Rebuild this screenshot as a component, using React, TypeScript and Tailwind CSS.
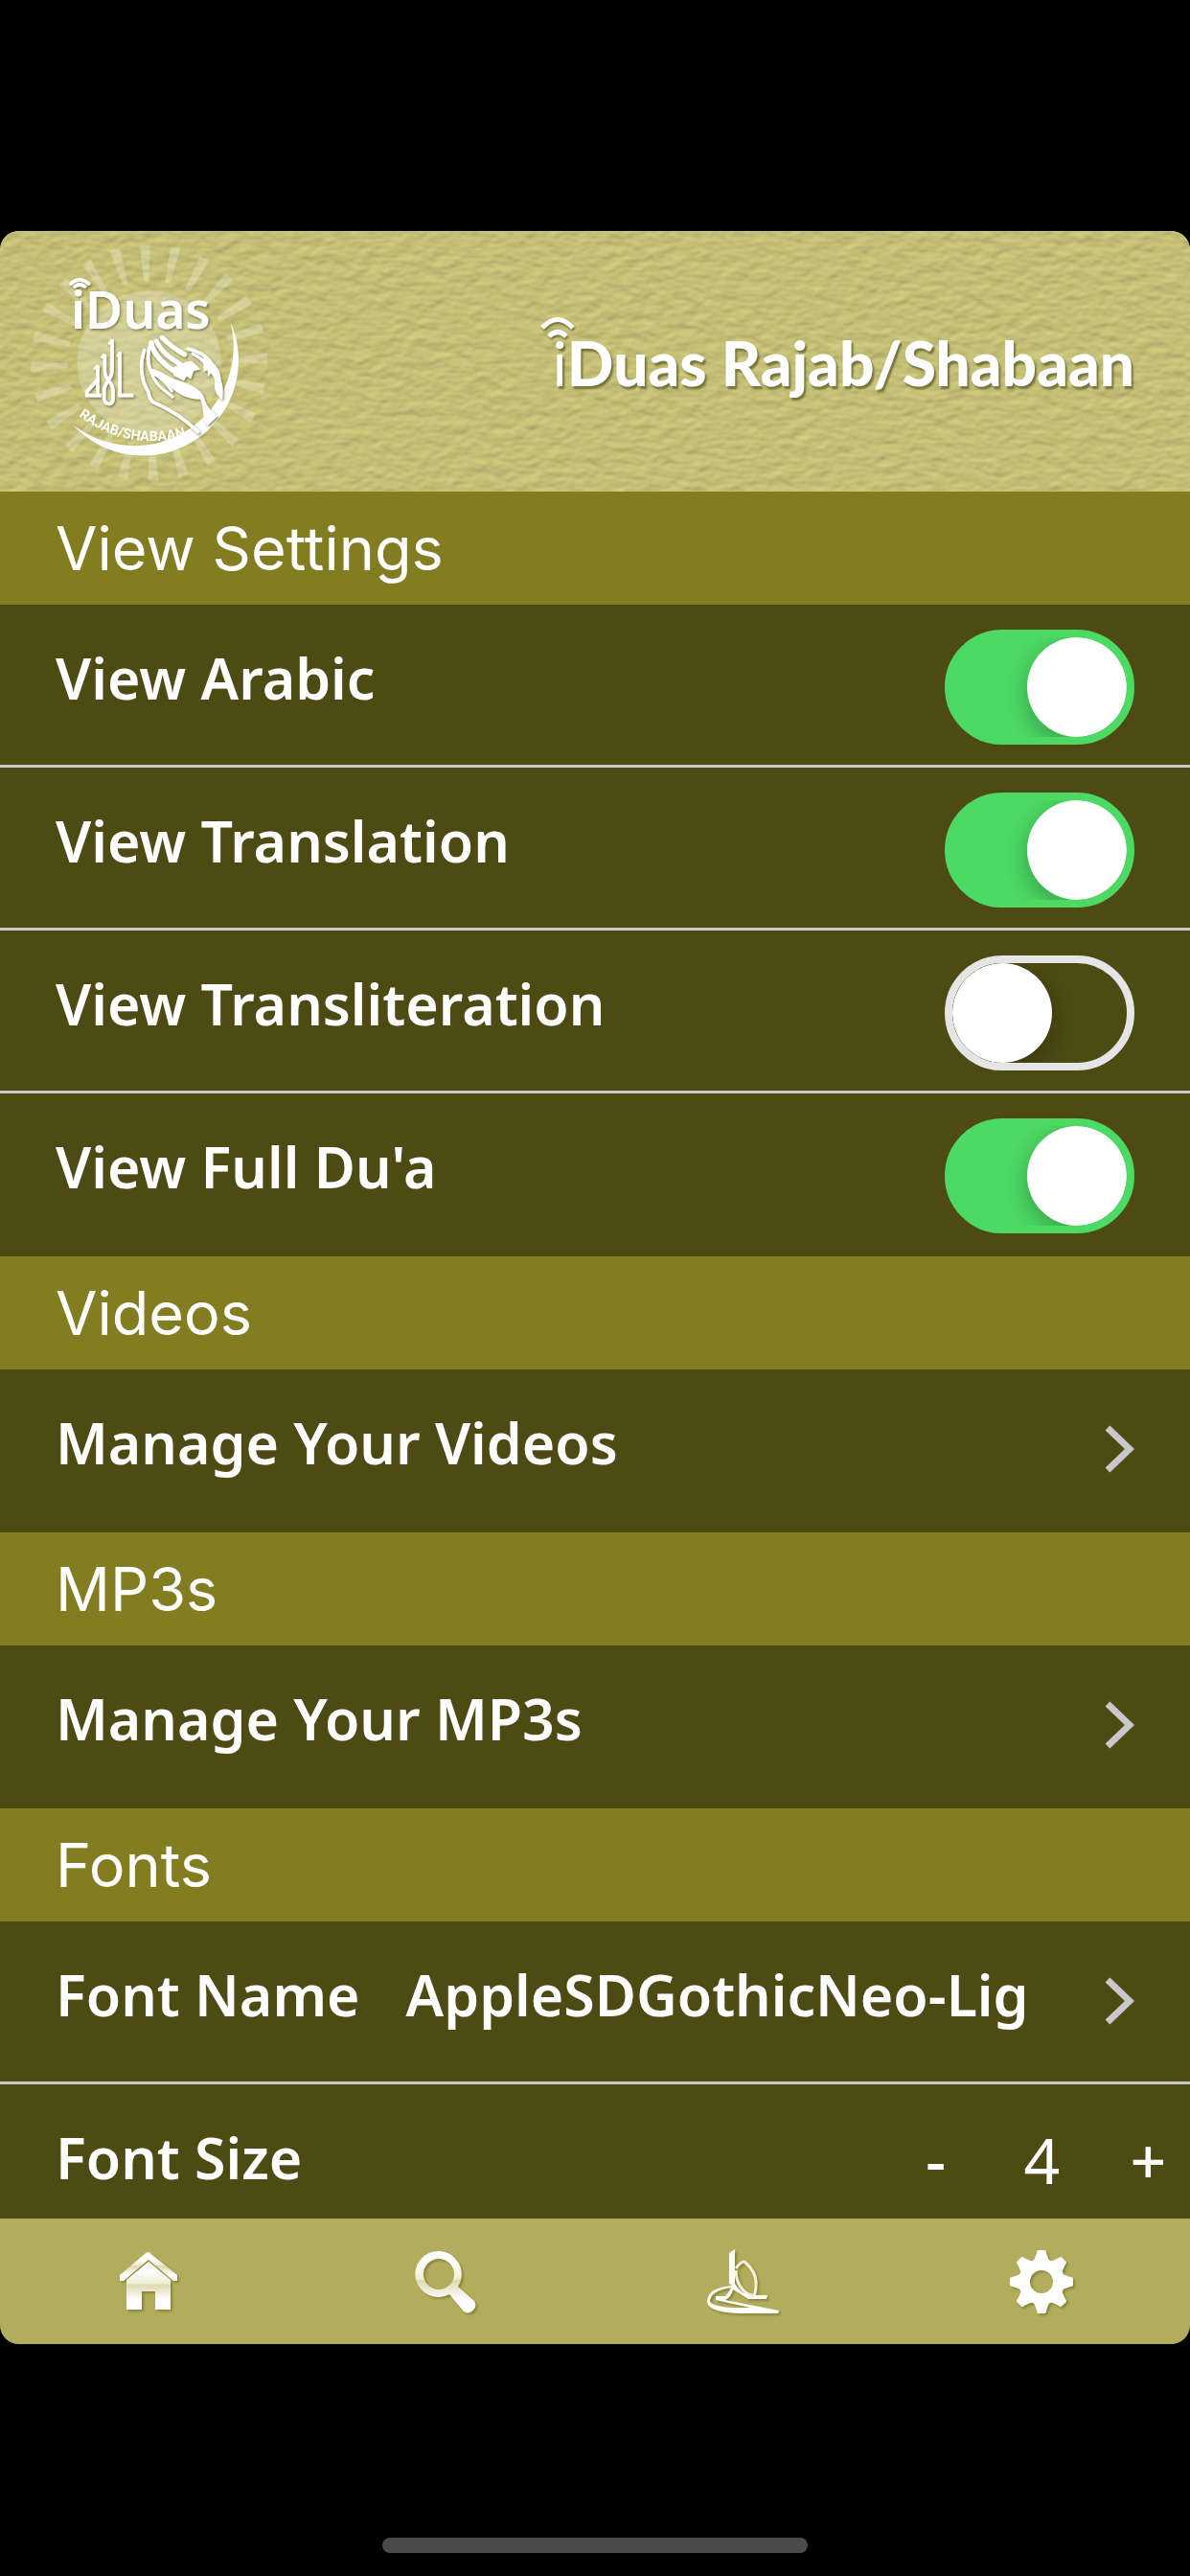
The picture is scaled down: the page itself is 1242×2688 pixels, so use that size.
import React, { useState } from 'react';

const rayAngles = Array.from({ length: 24 }, (_, i) => i * 15 - 2);

const HeaderTexture: React.FC = () => (
  <svg className="absolute inset-0 w-full h-full" aria-hidden="true">
    <filter id="paper" x="0" y="0" width="100%" height="100%" colorInterpolationFilters="sRGB">
      <feTurbulence type="fractalNoise" baseFrequency="0.06 0.1" numOctaves="2" seed="7" />
      <feColorMatrix values="0 0 0 0 0  0 0 0 0 0  0 0 0 0 0  1 0 0 0 0" />
      <feDiffuseLighting surfaceScale="0.9" diffuseConstant="1" lightingColor="#dcd685">
        <feDistantLight azimuth="250" elevation="63" />
      </feDiffuseLighting>
    </filter>
    <rect width="100%" height="100%" filter="url(#paper)" />
  </svg>
);

const Logo: React.FC = () => (
  <svg viewBox="0 33 960 816" className="relative w-[320px] h-[272px]" role="img" aria-label="iDuas logo">
    <defs>
      <path id="motto" d="M246 612 Q400 728 600 672" />
      <filter id="logoShadow" x="-10%" y="-10%" width="120%" height="120%">
        <feDropShadow dx="4" dy="5" stdDeviation="3" floodColor="#5c5a2a" floodOpacity="0.7" />
      </filter>
    </defs>
    <g fill="#fff" opacity="0.25">
      <circle cx="467" cy="445" r="225" />
      {rayAngles.map(angle => (
        <path key={angle} d="M451 75 H483 L475 190 H459 Z" transform={`rotate(${angle} 467 445)`} />
      ))}
    </g>
    <path fill="#fff" d="M722 318 A299 299 0 0 1 228 640 A312 312 0 0 0 722 318 Z" />
    <g filter="url(#logoShadow)">
      <g fill="none" stroke="#fff" strokeWidth="11" strokeLinecap="round">
        <path d="M222 198 Q250 174 278 198" />
        <path d="M234 207 Q250 195 266 207" />
      </g>
      <text x="222" y="340" fill="#fff" fontSize="160" fontWeight="600" fontFamily="'Noto Sans', sans-serif">iDuas</text>
      <g fill="none" stroke="#fff" strokeWidth="11" strokeLinejoin="round">
        <path d="M351 372 V468 Q351 486 340 500 Q326 518 326 534 V558 Q328 574 342 574 Q354 574 354 558 V534 Q354 518 340 500 Q328 488 328 470 V420" />
        <path d="M306 455 V498 L272 536 V548 H318" />
        <path d="M306 498 V548" />
        <path d="M375 412 V548 H418" />
        <path d="M340 388 L351 374 M318 430 L328 418 M366 426 L377 414 M296 466 L306 453" strokeWidth="8" />
      </g>
      <g fill="none" stroke="#fff" strokeLinecap="round" strokeLinejoin="round">
        <path strokeWidth="11" d="M452 406 C436 452 442 500 464 536 Q468 558 478 568 C530 590 580 622 620 662" />
        <path strokeWidth="11" d="M472 386 C460 420 462 440 470 468" />
        <path strokeWidth="16" d="M474 384 C480 420 510 448 556 480" />
        <path strokeWidth="15" d="M490 378 C505 410 530 430 576 458" />
        <path strokeWidth="15" d="M508 367 C530 390 550 405 578 420" />
        <path strokeWidth="9" d="M474 476 C484 512 508 526 540 552 M480 478 C505 492 522 508 538 534" />
        <path strokeWidth="10" d="M588 402 C620 408 645 424 662 446 M604 418 C625 428 640 440 650 458" />
      </g>
      <g fill="#fff">
        <path d="M540 462 C565 450 580 440 600 440 L628 466 L606 472 L598 496 L584 488 L576 502 L545 486 Z" />
        <path d="M468 462 C512 472 530 494 560 502 C600 514 628 530 638 552 C645 580 660 598 682 612 L650 642 C632 622 640 592 628 560 C590 560 560 545 530 518 C510 500 490 488 470 480 Z" />
        <path d="M636 430 C668 440 690 462 692 500 C700 520 698 540 696 562 C684 552 672 540 672 520 C676 500 668 488 660 478 L652 490 L650 468 L638 474 Z" />
      </g>
    </g>
    <text fill="#fff" fontSize="43" fontWeight="700" fontFamily="Roboto, sans-serif">
      <textPath href="#motto">RAJAB/SHABAAN</textPath>
    </text>
  </svg>
);

const Chevron: React.FC = () => (
  <svg viewBox="0 0 32 50" className="w-8 h-[50px] shrink-0" aria-hidden="true">
    <path d="M4 3 L27 25 L4 47" fill="none" stroke="#c8c7cc" strokeWidth="7" />
  </svg>
);

const SectionTitle: React.FC<{ children: React.ReactNode }> = ({ children }) => (
  <h2 className="h-[118px] shrink-0 flex items-center px-[58px] bg-[#827d20] font-['Inter'] font-normal text-[63px] leading-[80px]">
    {children}
  </h2>
);

interface ToggleRowProps {
  id: string;
  label: string;
  checked: boolean;
  onChange: (v: boolean) => void;
}

const ToggleRow: React.FC<ToggleRowProps> = ({ id, label, checked, onChange }) => (
  <div className="h-[170px] shrink-0 flex items-start justify-between px-[58px] pt-[26px] border-b-[3px] border-[#c8c7cc] last:border-transparent">
    <label htmlFor={id} className="pt-1.5 leading-[88px]">{label}</label>
    <input
      id={id}
      type="checkbox"
      checked={checked}
      onChange={e => onChange(e.target.checked)}
      className="appearance-none w-[198px] h-[120px] shrink-0 rounded-full border-8 border-[#e5e5e5] overflow-hidden checked:border-[#4cd964] checked:bg-[#4cd964] before:block before:w-[104px] before:h-[104px] before:rounded-full before:bg-white before:shadow-[0_8px_20px_4px_rgba(0,0,0,0.2)] checked:before:ml-[78px]"
    />
  </div>
);

interface LinkRowProps {
  label: string;
  value?: string;
  divider?: boolean;
}

const LinkRow: React.FC<LinkRowProps> = ({ label, value, divider }) => (
  <a
    href="#"
    className={`h-[170px] shrink-0 flex items-start justify-between px-[58px] pt-[26px] border-b-[3px] ${divider ? 'border-[#c8c7cc]' : 'border-transparent'}`}
  >
    <span className="flex gap-12 pt-1.5 leading-[88px] whitespace-nowrap">
      <span>{label}</span>
      {value && <span>{value}</span>}
    </span>
    <span className="pt-8"><Chevron /></span>
  </a>
);

const HomeIcon: React.FC = () => (
  <svg viewBox="0 0 62 64" className="w-[62px] h-16" aria-hidden="true">
    <path d="M31 1 L61 25 V31 L57 31 L31 9 L5 31 L1 31 V25 L27 3 Q31 -1 35 3 Z" fill="url(#gloss)" />
    <path d="M31 11 L54 30 V61 H38 V42 H24 V61 H8 V30 Z" fill="url(#gloss)" />
  </svg>
);

const SearchIcon: React.FC = () => (
  <svg viewBox="0 0 66 66" className="w-[66px] h-[66px]" aria-hidden="true">
    <path
      fillRule="evenodd"
      fill="url(#gloss)"
      d="M25 1 A24 24 0 0 1 45 38 L62 53 A8 8 0 0 1 51 64 L36 46 A24 24 0 1 1 25 1 Z M25 9 A16 16 0 1 0 25 41 A16 16 0 1 0 25 9 Z"
    />
  </svg>
);

const DuaIcon: React.FC = () => (
  <svg viewBox="0 0 78 68" className="w-[78px] h-[68px]" aria-hidden="true">
    <path d="M24 4 L30 0 V36 Q36 47 48 48 H64 L63 52 H44 L28 42 Q26 50 20 53 L76 64 L75 67 H36 Q1 66 1 54 Q2 40 27 38 L24 36 Z M26 40 Q5 43 4 54 Q6 62 46 61 L10 53 V49 H20 L24 44 Z" fill="#fff" fillRule="evenodd" />
    <path d="M31 20 Q37 12 40 13 Q53 24 52 37 Q52 44 50 48 M31 22 Q31 34 38 42 Q42 47 50 49" fill="none" stroke="#f4f2d8" strokeWidth="3" />
  </svg>
);

const GearIcon: React.FC = () => (
  <svg viewBox="-34 -34 68 68" className="w-[68px] h-[68px]" aria-hidden="true">
    <circle r="18" fill="none" stroke="#fff" strokeWidth="12" />
    {[0, 45, 90, 135, 180, 225, 270, 315].map(a => (
      <path key={a} d="M-8 -22 L-5 -30 Q-5 -33 -3 -33 H3 Q5 -33 5 -30 L8 -22 Z" fill="#fff" transform={`rotate(${a})`} />
    ))}
  </svg>
);

const tabs = [
  { label: 'Home', Icon: HomeIcon },
  { label: 'Search', Icon: SearchIcon },
  { label: 'Duas', Icon: DuaIcon },
  { label: 'Settings', Icon: GearIcon },
];

const App: React.FC = () => {
  const [view, setView] = useState({ arabic: true, translation: true, transliteration: false, full: true });
  const [fontSize, setFontSize] = useState(4);

  return (
    <div className="h-screen flex flex-col bg-black pt-[241px] text-white">
      <svg className="absolute w-0 h-0" aria-hidden="true">
        <linearGradient id="gloss" x1="0" y1="0" x2="0" y2="1">
          <stop offset="0" stopColor="#fff" />
          <stop offset="0.2" stopColor="#fff" />
          <stop offset="0.46" stopColor="#eeecd4" />
          <stop offset="0.48" stopColor="#dddab0" />
          <stop offset="0.8" stopColor="#fff" />
        </linearGradient>
      </svg>
      <div className="flex-1 min-h-0 flex flex-col rounded-[20px] overflow-hidden bg-[#4e4a14]">
        <header className="relative h-[272px] shrink-0 flex items-center justify-between bg-[#c5c076] overflow-hidden">
          <HeaderTexture />
          <Logo />
          <div className="relative pr-[58px] pt-1">
            <svg viewBox="0 0 36 24" className="absolute -top-1 -left-3 w-9 h-6 drop-shadow-[1px_2px_1px_#6f6c35]" aria-hidden="true">
              <path d="M2 11 Q18 -6 34 11 M9 20 Q18 11 27 20" fill="none" stroke="#fff" strokeWidth="5" />
            </svg>
            <h1 className="font-['Lato'] font-black text-[64px] leading-[80px] [text-shadow:2px_3px_2px_#77743c]">
              <span className="font-normal">i</span>Duas Rajab/Shabaan
            </h1>
          </div>
        </header>

        <main className="flex-1 min-h-0 overflow-hidden flex flex-col font-['Noto_Sans'] font-semibold text-[59px]">
          <SectionTitle>View Settings</SectionTitle>
          <div className="shrink-0">
            <ToggleRow id="arabic" label="View Arabic" checked={view.arabic} onChange={v => setView({ ...view, arabic: v })} />
            <ToggleRow id="translation" label="View Translation" checked={view.translation} onChange={v => setView({ ...view, translation: v })} />
            <ToggleRow id="transliteration" label="View Transliteration" checked={view.transliteration} onChange={v => setView({ ...view, transliteration: v })} />
            <ToggleRow id="full" label="View Full Du'a" checked={view.full} onChange={v => setView({ ...view, full: v })} />
          </div>
          <SectionTitle>Videos</SectionTitle>
          <LinkRow label="Manage Your Videos" />
          <SectionTitle>MP3s</SectionTitle>
          <LinkRow label="Manage Your MP3s" />
          <SectionTitle>Fonts</SectionTitle>
          <LinkRow label="Font Name" value="AppleSDGothicNeo-Lig" divider />
          <div className="h-[170px] shrink-0 flex items-start justify-between pl-[58px] pt-[26px]">
            <span className="pt-1.5 leading-[88px]">Font Size</span>
            <div className="flex gap-6 pt-2 font-normal text-[66px] leading-[88px] text-center">
              <button aria-label="Smaller" className="w-[87px] font-medium" onClick={() => setFontSize(fontSize - 1)}>-</button>
              <output className="w-[87px]">{fontSize}</output>
              <button aria-label="Larger" className="w-[87px] font-medium" onClick={() => setFontSize(fontSize + 1)}>+</button>
            </div>
          </div>
        </main>

        <nav className="h-[131px] shrink-0 grid grid-cols-4 bg-[#b2ad5c]">
          {tabs.map(({ label, Icon }) => (
            <button key={label} aria-label={label} className="flex items-center justify-center drop-shadow-[2px_2px_1px_#8a853a]">
              <Icon />
            </button>
          ))}
        </nav>
      </div>
      <div className="h-[242px] shrink-0 flex items-end justify-center pb-6">
        <div className="w-[444px] h-4 rounded-full bg-[#4a4a4a]" />
      </div>
    </div>
  );
};

export default App;
